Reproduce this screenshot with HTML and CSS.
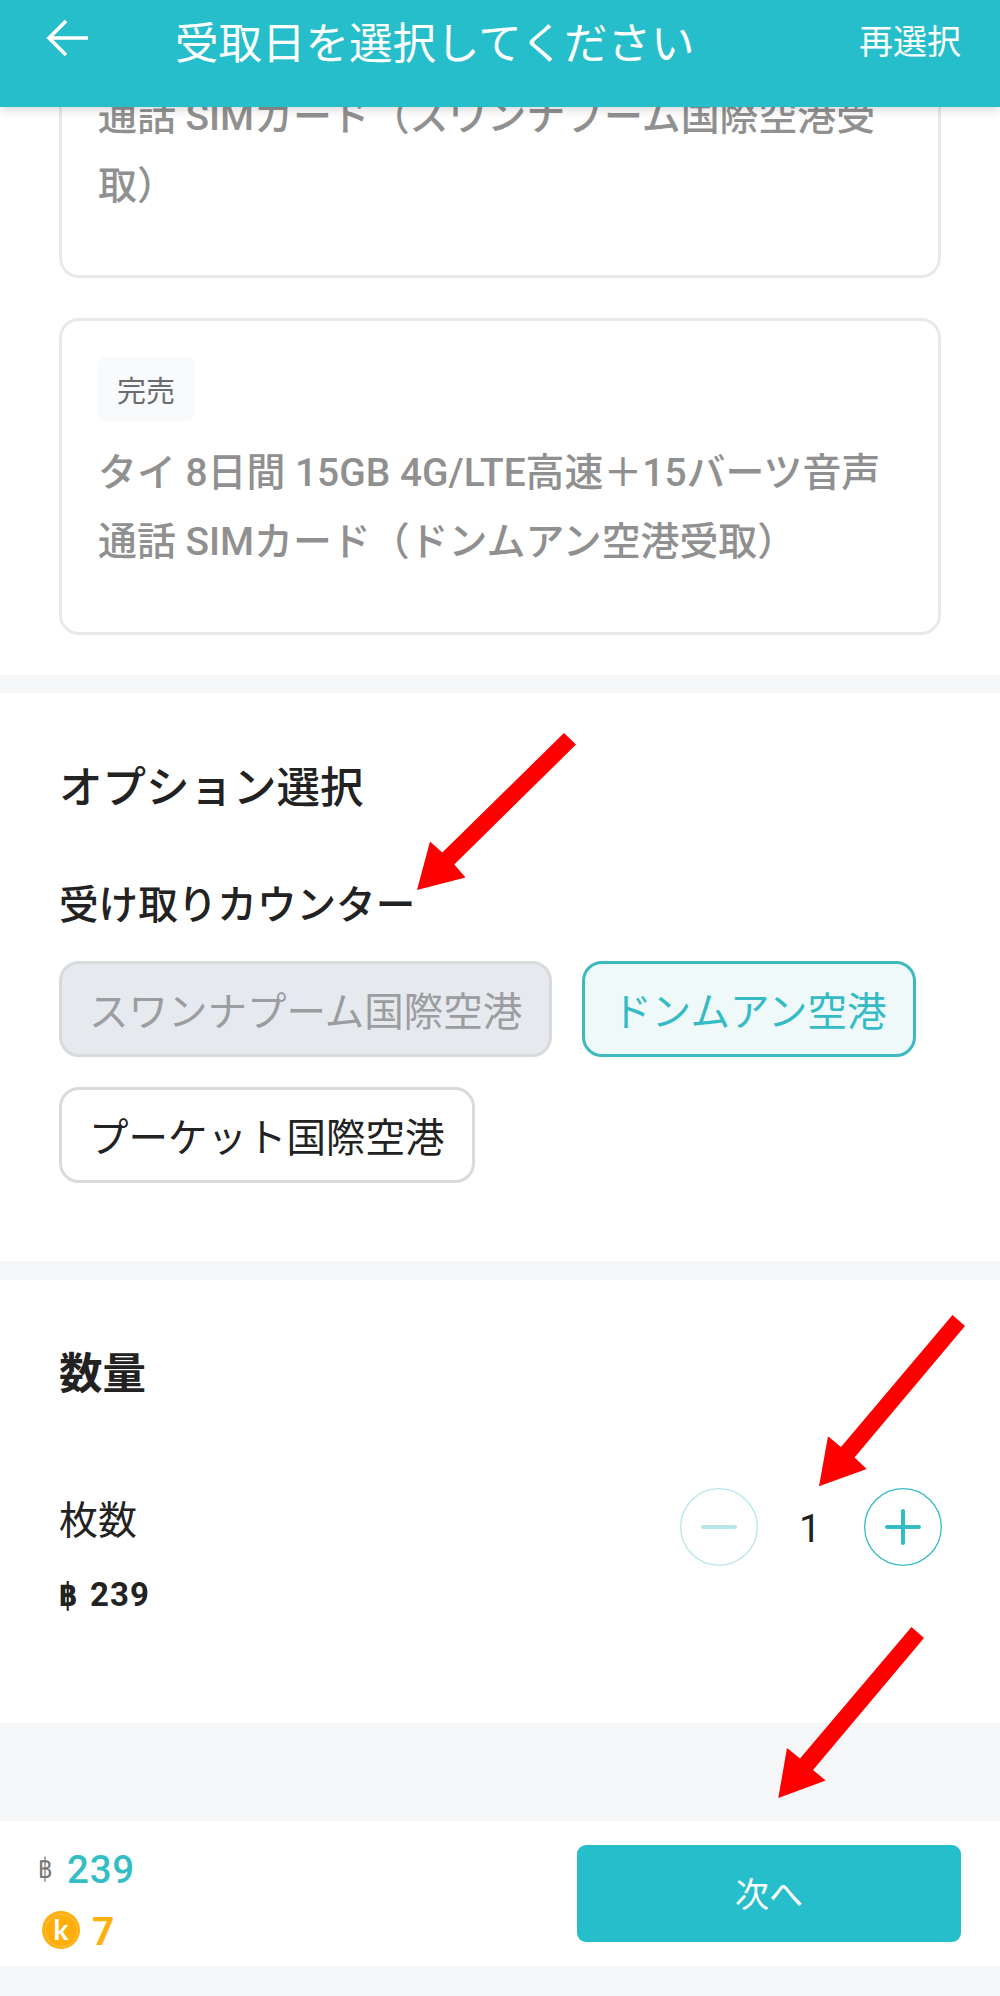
FILE: index.html
```html
<!DOCTYPE html>
<html lang="ja">
<head>
<meta charset="utf-8">
<title>受取日を選択してください</title>
<link rel="stylesheet" href="styles.css">
</head>
<body>
<div class="screen">
  <header class="topbar">
    <svg class="back" viewBox="0 0 44 38" width="44" height="38"><path d="M20 2 3 19 20 36M3 19H42"/></svg>
    <h1 class="title">受取日を選択してください</h1>
    <span class="reset">再選択</span>
  </header>

  <main class="content">
    <section class="packages">
      <article class="card card-first">
        <p class="card-name">通話 SIMカード（スワンナプーム国際空港受<br>取）</p>
      </article>
      <article class="card card-second">
        <span class="badge">完売</span>
        <p class="card-name">タイ 8日間 15GB 4G/LTE高速＋15バーツ音声<br>通話 SIMカード（ドンムアン空港受取）</p>
      </article>
    </section>

    <section class="options">
      <h2 class="heading">オプション選択</h2>
      <h3 class="subheading">受け取りカウンター</h3>
      <div class="chips">
        <span class="chip chip-disabled">スワンナプーム国際空港</span>
        <span class="chip chip-selected">ドンムアン空港</span>
        <span class="chip">プーケット国際空港</span>
      </div>
    </section>

    <section class="quantity">
      <h2 class="heading heading-strong">数量</h2>
      <div class="qty-row">
        <div class="qty-info">
          <span class="qty-label">枚数</span>
          <span class="qty-price"><span class="baht">฿</span>239</span>
        </div>
        <div class="stepper">
          <svg class="step step-off" viewBox="0 0 78 78" width="78" height="78"><circle cx="39" cy="39" r="38.3"/><path d="M23 39H55"/></svg>
          <span class="count">1</span>
          <svg class="step" viewBox="0 0 78 78" width="78" height="78"><circle cx="39" cy="39" r="38.3"/><path d="M23 39H55M39 23V55"/></svg>
        </div>
      </div>
    </section>
  </main>

  <footer class="checkout">
    <div class="totals">
      <div class="total"><span class="currency">฿</span><span class="amount">239</span></div>
      <div class="points"><span class="coin"><span class="coin-face">k</span></span><span class="points-value">7</span></div>
    </div>
    <button class="next" type="button">次へ</button>
  </footer>

  <svg class="pointers" viewBox="0 0 1000 1996" width="1000" height="1996">
    <path d="M417 890 430 841.5 442.3 852.5 564 733 576 744.5 454.3 864.5 465.5 877.5Z"/>
    <path d="M819 1486.3 828 1436.3 841 1447 952.5 1315 965 1326 854.5 1457.5 866.7 1469Z"/>
    <path d="M778.3 1798 787 1748 800 1758.5 911.5 1627 924 1638 813 1770 825.7 1780.5Z"/>
  </svg>
</div>
</body>
</html>
```
FILE: styles.css
```css
* { box-sizing: border-box; }

body {
  margin: 0;
  background: #f5f6f8;
  color: #222;
  font-family: Roboto, "Noto Sans CJK JP", sans-serif;
}

h1, h2, h3, p { margin: 0; }

.screen {
  position: relative;
  display: flex;
  flex-direction: column;
  width: 1000px;
  height: 1996px;
  overflow: hidden;
}

.topbar {
  z-index: 1;
  display: flex;
  align-items: flex-start;
  flex: none;
  height: 107px;
  padding: 0 39px 0 46px;
  background: #27becb;
  box-shadow: 0 2px 10px rgba(0, 0, 0, .18);
  color: #fff;
}

.back {
  margin-top: 19px;
  fill: none;
  stroke: #fff;
  stroke-width: 3.6;
}

.title {
  margin-left: 85px;
  font-size: 43.5px;
  font-weight: 400;
  line-height: 89px;
}

.reset {
  margin-left: auto;
  font-size: 34px;
  line-height: 84px;
}

.content { flex: none; height: 1616px; overflow: hidden; }

.packages {
  height: 568px;
  padding: 0 59px;
  background: #fff;
}

.card {
  padding: 0 36px;
  border: 3px solid #e8e9ed;
  border-radius: 20px;
}

.card-first {
  height: 171px;
  border-top: 0;
  border-radius: 0 0 20px 20px;
}

.card-first::before { content: ""; display: table; }

.card-first .card-name { margin-top: -25px; }

.card-second {
  height: 317px;
  margin-top: 40px;
  padding-top: 36px;
}

.card-name {
  color: #909090;
  font-size: 38.9px;
  font-weight: 500;
  line-height: 69px;
  white-space: nowrap;
}

.badge {
  display: block;
  width: 98px;
  height: 64px;
  margin-left: -1px;
  border-radius: 8px;
  background: #f9fafc;
  color: #6b6c6e;
  font-size: 29px;
  line-height: 70px;
  text-align: center;
}

.card-second .card-name { margin-top: 17px; }

.options {
  height: 568px;
  margin-top: 18px;
  padding: 66px 59px 0;
  background: #fff;
}

.heading {
  font-size: 43.5px;
  font-weight: 500;
  line-height: 60px;
}

.heading-strong { font-weight: 700; }

.subheading {
  margin-top: 59px;
  font-size: 39.6px;
  font-weight: 500;
  line-height: 56px;
}

.chips {
  display: flex;
  flex-wrap: wrap;
  gap: 30px;
  margin-top: 27px;
}

.chip {
  height: 96px;
  padding: 0 27px;
  border: 3px solid #d9dadc;
  border-radius: 20px;
  font-size: 39.5px;
  line-height: 98px;
}

.chip-disabled { background: #e6e9ed; color: #9b9da1; }

.chip-selected {
  border-color: #3db9c0;
  background: #eff9fa;
  color: #34bbc5;
}

.quantity {
  height: 443px;
  margin-top: 19px;
  padding: 65px 58px 0 59px;
  background: #fff;
}

.qty-row {
  display: flex;
  justify-content: space-between;
  margin-top: 83px;
}

.qty-info { display: flex; flex-direction: column; }

.qty-label { font-size: 39px; line-height: 67px; }

.qty-price {
  display: flex;
  margin-top: 15px;
  font-size: 33px;
  font-weight: 700;
  letter-spacing: 1.1px;
  line-height: 50px;
}

.baht {
  width: 31px;
  font-family: "DejaVu Sans", sans-serif;
  transform: scaleX(.8);
  transform-origin: left;
}

.stepper { display: flex; align-items: center; height: 78px; }

.step {
  fill: none;
  stroke: #35bbc4;
  stroke-width: 1.3;
}

.step path { stroke-width: 4; stroke-linecap: round; }

.step-off { opacity: .35; }

.count {
  width: 106px;
  padding: 4px 2px 0 0;
  font-size: 39px;
  line-height: 78px;
  text-align: center;
}

.checkout {
  display: flex;
  justify-content: space-between;
  flex: none;
  height: 145px;
  margin-top: 98px;
  padding: 24px 39px 0 38px;
  background: #fff;
}

.totals { display: flex; flex-direction: column; }

.total { display: flex; align-items: center; height: 48px; }

.currency {
  width: 29px;
  color: #777;
  font-family: "DejaVu Sans", sans-serif;
  font-size: 28px;
  line-height: 48px;
  transform: scaleX(.82);
  transform-origin: left;
}

.amount {
  color: #35bdc5;
  font-size: 38.5px;
  font-weight: 500;
  letter-spacing: .8px;
}

.points { display: flex; align-items: center; height: 48px; margin-top: 13px; }

.coin {
  display: flex;
  align-items: center;
  justify-content: center;
  width: 38px;
  height: 38px;
  margin-left: 4px;
  border-radius: 50%;
  background: #ffae0c;
}

.coin-face {
  width: 33px;
  height: 33px;
  border: 1px dotted #ffdf96;
  border-radius: 50%;
  color: #fff;
  font: 700 28px/28px Lato, sans-serif;
  text-align: center;
}

.points-value {
  margin-left: 12px;
  padding-top: 4px;
  color: #fdb10f;
  font-size: 39px;
  font-weight: 700;
}

.next {
  width: 384px;
  height: 97px;
  padding: 4px 0 0;
  border: 0;
  border-radius: 9px;
  background: #27becb;
  color: #fff;
  font: 400 34px/93px Roboto, "Noto Sans CJK JP", sans-serif;
}

.pointers {
  position: absolute;
  z-index: 2;
  top: 0;
  left: 0;
  fill: #fe0000;
  pointer-events: none;
}
```
